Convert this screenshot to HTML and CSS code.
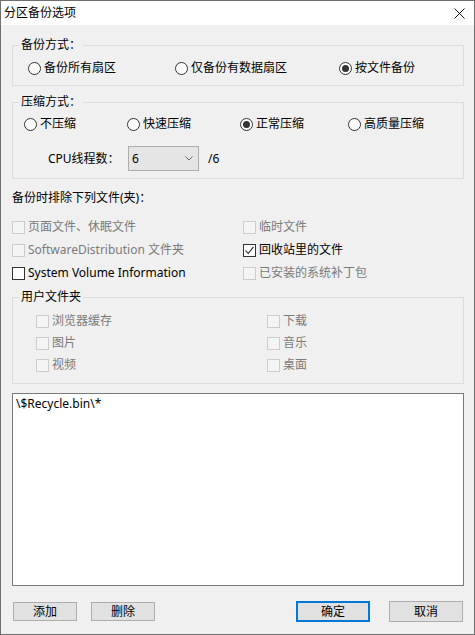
FILE: index.html
```html
<!DOCTYPE html>
<html lang="zh-CN">
<head>
<meta charset="utf-8">
<title>分区备份选项</title>
<link rel="stylesheet" href="styles.css">
</head>
<body>
<div class="window">
  <div class="titlebar">
    <span class="title">分区备份选项</span>
    <svg class="close" viewBox="0 0 11 11" width="11" height="11"><path d="M0.5 0.5 L10.5 10.5 M10.5 0.5 L0.5 10.5" stroke="#111" stroke-width="1" fill="none"/></svg>
  </div>
  <div class="client">
    <div class="group g1">
      <div class="group-title">备份方式：</div>
      <div class="radios">
        <label class="option"><span class="radio"></span>备份所有扇区</label>
        <label class="option"><span class="radio"></span>仅备份有数据扇区</label>
        <label class="option"><span class="radio on"></span>按文件备份</label>
      </div>
    </div>
    <div class="group g2">
      <div class="group-title">压缩方式：</div>
      <div class="radios">
        <label class="option"><span class="radio"></span>不压缩</label>
        <label class="option"><span class="radio"></span>快速压缩</label>
        <label class="option"><span class="radio on"></span>正常压缩</label>
        <label class="option"><span class="radio"></span>高质量压缩</label>
      </div>
      <div class="cpu-row">
        <span class="cpu-label">CPU线程数：</span>
        <div class="combo"><span>6</span><svg class="chev" viewBox="0 0 8 5" width="8" height="5"><path d="M0.5 0.5 L4 4 L7.5 0.5" stroke="#666" stroke-width="1" fill="none"/></svg></div>
        <span class="ratio">/6</span>
      </div>
    </div>
    <div class="section-label">备份时排除下列文件(夹)：</div>
    <div class="checks">
      <label class="option disabled"><span class="box"></span>页面文件、休眠文件</label>
      <label class="option disabled"><span class="box"></span>临时文件</label>
      <label class="option disabled"><span class="box"></span>SoftwareDistribution 文件夹</label>
      <label class="option"><span class="box"><svg viewBox="0 0 11 11" width="11" height="11"><path d="M1.5 5.5 L4.2 8.5 L9.5 1.8" stroke="#222" stroke-width="1.1" fill="none"/></svg></span>回收站里的文件</label>
      <label class="option"><span class="box"></span>System Volume Information</label>
      <label class="option disabled"><span class="box"></span>已安装的系统补丁包</label>
    </div>
    <div class="group g3">
      <div class="group-title">用户文件夹</div>
      <div class="checks">
        <label class="option disabled"><span class="box"></span>浏览器缓存</label>
        <label class="option disabled"><span class="box"></span>下载</label>
        <label class="option disabled"><span class="box"></span>图片</label>
        <label class="option disabled"><span class="box"></span>音乐</label>
        <label class="option disabled"><span class="box"></span>视频</label>
        <label class="option disabled"><span class="box"></span>桌面</label>
      </div>
    </div>
    <div class="textbox">\$Recycle.bin\*</div>
    <div class="buttons">
      <button class="btn small">添加</button>
      <button class="btn small second">删除</button>
      <button class="btn big default">确定</button>
      <button class="btn big cancel">取消</button>
    </div>
  </div>
</div>
</body>
</html>
```

FILE: styles.css
```css
* { box-sizing: border-box; }
html, body { margin: 0; padding: 0; }
body {
  font: 12px/16px "Noto Sans", "Noto Sans CJK SC", sans-serif;
  color: #000;
  background: #f0f0f0;
}
.window {
  width: 475px;
  height: 635px;
  border: 1px solid #6e6e6e;
  background: #f0f0f0;
  display: flex;
  flex-direction: column;
}
.titlebar {
  height: 24px;
  flex: none;
  background: #fff;
  display: flex;
  align-items: center;
  justify-content: space-between;
  padding: 0 9px 0 3px;
}
.close { display: block; }
.client {
  padding: 0 10px 0 11px;
  display: flex;
  flex-direction: column;
}
.group { border: 1px solid #dcdcdc; }
.group-title {
  width: fit-content;
  margin: -9px 0 0 6px;
  padding: 0 2px;
  background: #f0f0f0;
  line-height: 16px;
}
.option {
  display: flex;
  align-items: center;
  height: 16px;
  white-space: nowrap;
}
.radios { display: grid; }
.radio {
  flex: none;
  width: 13px;
  height: 13px;
  border: 1px solid #333;
  border-radius: 50%;
  background: #fff;
  margin-right: 3px;
  display: flex;
  align-items: center;
  justify-content: center;
}
.radio.on::after {
  content: "";
  width: 7px;
  height: 7px;
  border-radius: 50%;
  background: #333;
}
.g1 { margin-top: 20px; padding-bottom: 9px; }
.g1 .radios {
  margin-top: 7px;
  padding-left: 15px;
  grid-template-columns: 147px 164px auto;
}
.g2 { margin-top: 16px; padding-bottom: 7px; }
.g2 .radios {
  margin-top: 6px;
  padding-left: 11px;
  grid-template-columns: 103px 113px 108px auto;
}
.cpu-row {
  margin-top: 14px;
  padding-left: 35px;
  display: flex;
  align-items: center;
  height: 25px;
}
.cpu-label { width: 80px; }
.combo {
  width: 71px;
  height: 25px;
  border: 1px solid #adadad;
  background: #e5e5e5;
  display: flex;
  align-items: center;
  justify-content: space-between;
  padding: 0 5px 0 3px;
}
.chev { display: block; }
.ratio { margin-left: 9px; }
.section-label { margin-top: 11px; }
.checks {
  display: grid;
  grid-template-columns: 231px auto;
  row-gap: 7px;
  margin-top: 13px;
}
.box {
  flex: none;
  width: 13px;
  height: 13px;
  border: 1px solid #333;
  background: #fff;
  margin-right: 3px;
  display: flex;
  align-items: center;
  justify-content: center;
}
.box svg { display: block; }
.disabled { color: #7a7a7a; }
.disabled .box { border-color: #cccccc; background: #f4f4f4; }
.g3 { margin-top: 16px; padding-bottom: 10px; }
.g3 .checks {
  margin-top: 8px;
  row-gap: 6px;
  padding-left: 23px;
}
.textbox {
  margin-top: 9px;
  height: 193px;
  border: 1px solid #7a7a7a;
  background: #fff;
  padding: 2px 3px;
}
.buttons {
  margin-top: 15px;
  height: 21px;
  display: flex;
  align-items: center;
}
.btn {
  font: inherit;
  color: #000;
  margin: 0;
  padding: 0;
  border: 1px solid #adadad;
  background: #e1e1e1;
  text-align: center;
  line-height: 16px;
}
.btn.small { width: 64px; height: 19px; margin-left: 1px; }
.btn.small.second { margin-left: 14px; }
.btn.big { width: 74px; height: 21px; }
.btn.default { margin-left: auto; border: 2px solid #0078d7; }
.btn.cancel { margin-left: 19px; margin-right: 1px; }
```
